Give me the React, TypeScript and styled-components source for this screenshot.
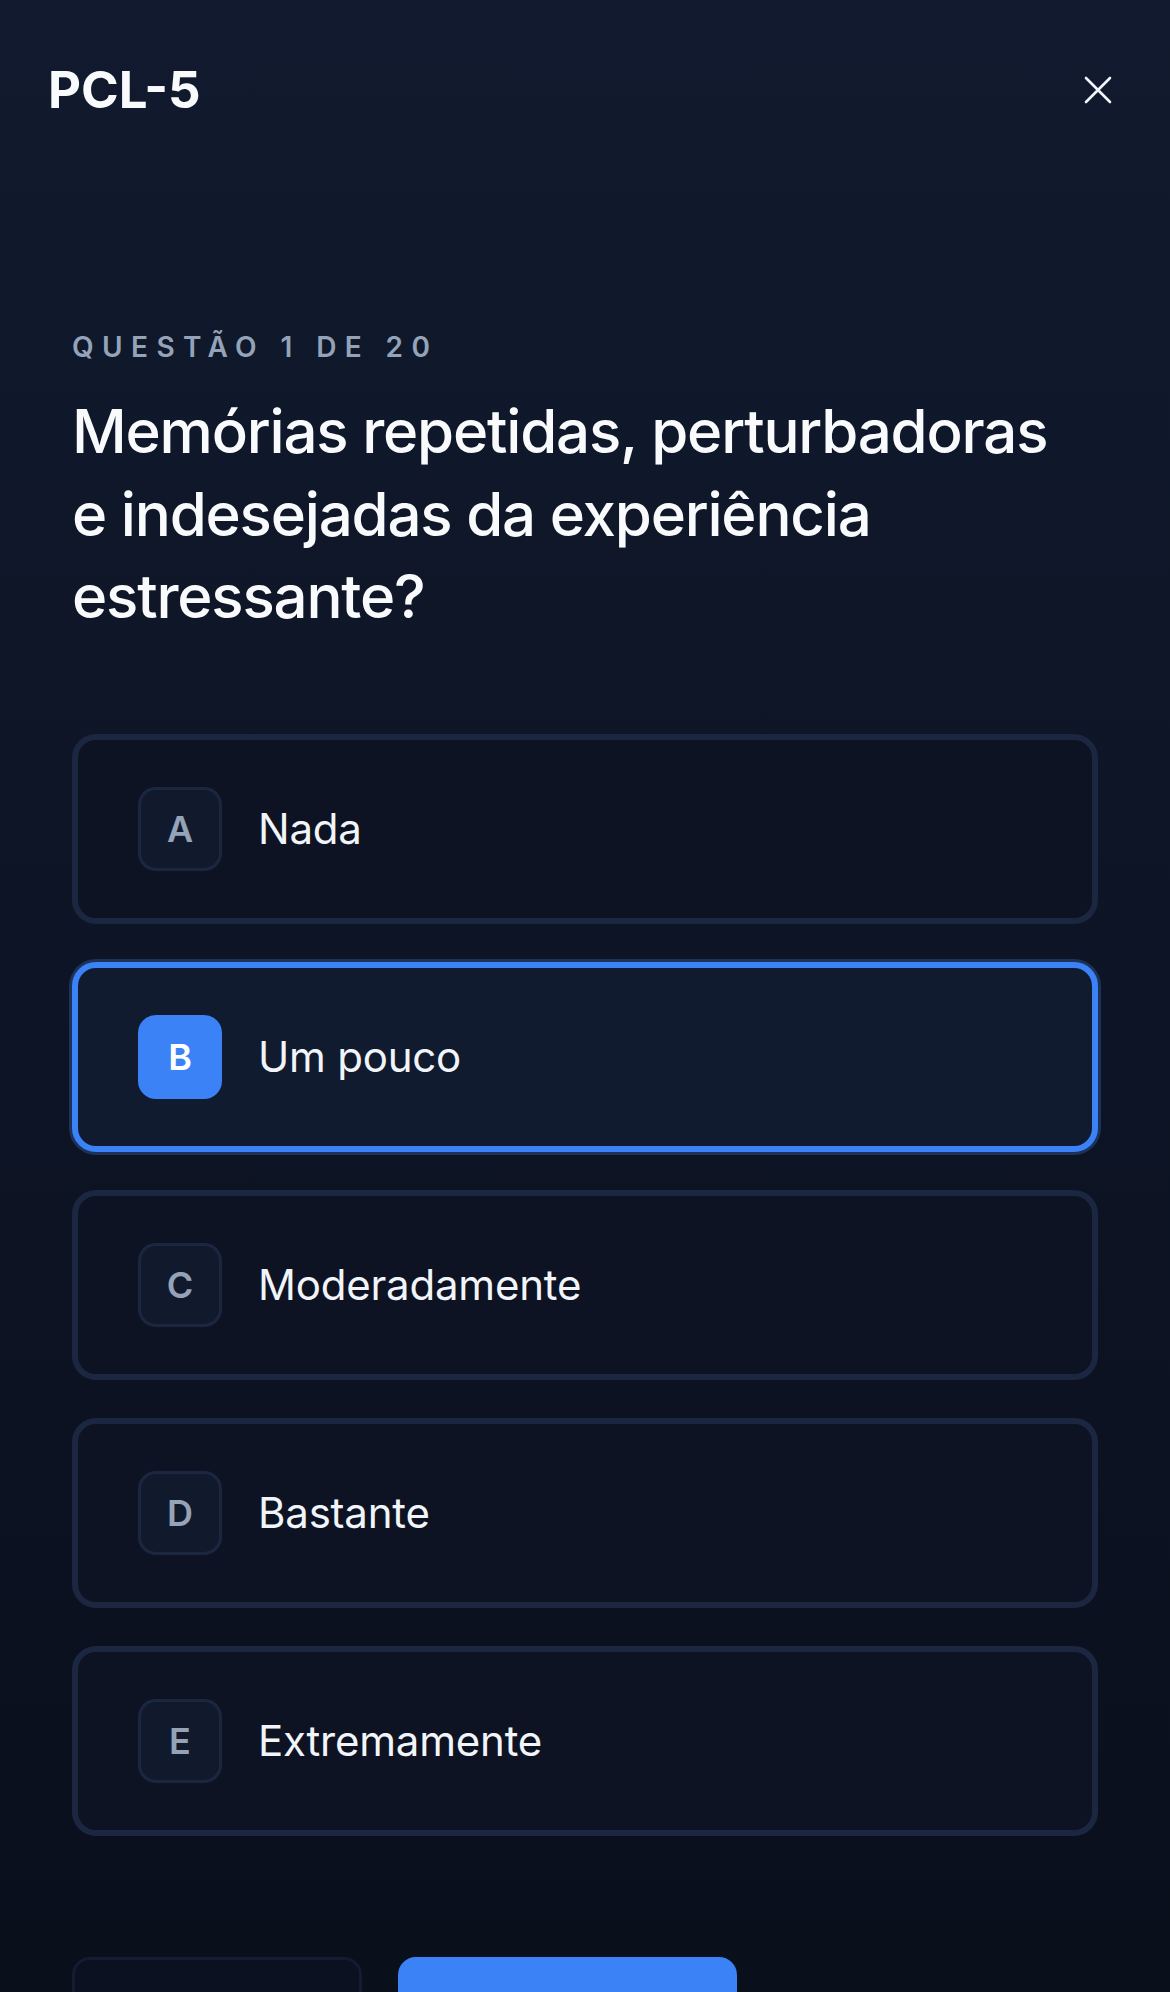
import styled, { createGlobalStyle } from "styled-components";

const GlobalStyle = createGlobalStyle`
  html, body {
    margin: 0;
    padding: 0;
    background: #0a0f1c;
    font-family: Inter, "Noto Sans", "Liberation Sans", sans-serif;
    -webkit-font-smoothing: antialiased;
  }
  * {
    box-sizing: border-box;
  }
`;

const Page = styled.div`
  min-height: 100vh;
  background: linear-gradient(180deg, #111a2e 0px, #0d1425 1000px, #0a0f1c 1992px);
  color: #f8fafc;
  padding-bottom: 48px;
`;

const Header = styled.header`
  display: flex;
  align-items: center;
  justify-content: space-between;
  padding: 64px 46px 0 48px;
`;

const Title = styled.h1`
  margin: 0;
  font-size: 51px;
  line-height: 48px;
  font-weight: 700;
  letter-spacing: 0;
  color: #f8fafc;
`;

const CloseButton = styled.button`
  width: 52px;
  height: 52px;
  display: flex;
  align-items: center;
  justify-content: center;
  padding: 0;
  border: none;
  background: transparent;
  color: #f1f5f9;
  cursor: pointer;
`;

const Content = styled.main`
  padding: 214px 72px 0;
`;

const Label = styled.div`
  font-size: 28px;
  line-height: 34px;
  font-weight: 600;
  letter-spacing: 0.3em;
  text-transform: uppercase;
  color: #94a3b8;
`;

const Question = styled.h2`
  margin: 26px 0 0;
  max-width: 1000px;
  font-size: 60px;
  line-height: 82.5px;
  font-weight: 500;
  letter-spacing: -0.02em;
  color: #f8fafc;
`;

const Options = styled.div`
  display: flex;
  flex-direction: column;
  gap: 38px;
  margin-top: 96px;
`;

const Option = styled.button<{ $selected?: boolean }>`
  display: flex;
  align-items: center;
  gap: 36px;
  width: 100%;
  height: 190px;
  padding: 0 60px;
  border-radius: 24px;
  border: 6px solid ${(p) => (p.$selected ? "#3b82f6" : "#1b2741")};
  background: ${(p) => (p.$selected ? "#111b30" : "#0d1322")};
  box-shadow: ${(p) => (p.$selected ? "0 0 0 3px #1c3258" : "none")};
  font-family: inherit;
  text-align: left;
  cursor: pointer;
`;

const Letter = styled.span<{ $selected?: boolean }>`
  flex: none;
  width: 84px;
  height: 84px;
  display: flex;
  align-items: center;
  justify-content: center;
  border-radius: 18px;
  border: 3px solid ${(p) => (p.$selected ? "#3b82f6" : "#1b2741")};
  background: ${(p) => (p.$selected ? "#3b82f6" : "#111a2d")};
  color: ${(p) => (p.$selected ? "#ffffff" : "#94a3b8")};
  font-size: 36px;
  font-weight: 600;
`;

const OptionText = styled.span`
  font-size: 42px;
  font-weight: 400;
  letter-spacing: -0.005em;
  color: #f1f5f9;
`;

const Footer = styled.div`
  display: flex;
  gap: 36px;
  padding: 121px 72px 0;
`;

const NavButton = styled.button<{ $primary?: boolean }>`
  width: ${(p) => (p.$primary ? "339px" : "290px")};
  height: 150px;
  border-radius: 18px;
  border: 3px solid ${(p) => (p.$primary ? "#3b82f6" : "#141c31")};
  background: ${(p) => (p.$primary ? "#3b82f6" : "#0b1120")};
  cursor: pointer;
`;

const options = [
  { key: "A", label: "Nada" },
  { key: "B", label: "Um pouco" },
  { key: "C", label: "Moderadamente" },
  { key: "D", label: "Bastante" },
  { key: "E", label: "Extremamente" },
];

const selected = "B";

export default function App() {
  return (
    <Page>
      <GlobalStyle />
      <Header>
        <Title>PCL-5</Title>
        <CloseButton aria-label="Fechar">
          <svg width="28" height="28" viewBox="0 0 28 28" fill="none">
            <path
              d="M2 2L26 26M26 2L2 26"
              stroke="currentColor"
              strokeWidth="2.6"
              strokeLinecap="round"
            />
          </svg>
        </CloseButton>
      </Header>
      <Content>
        <Label>Questão 1 de 20</Label>
        <Question>
          Memórias repetidas, perturbadoras e indesejadas da experiência
          estressante?
        </Question>
        <Options>
          {options.map((opt) => (
            <Option key={opt.key} $selected={opt.key === selected}>
              <Letter $selected={opt.key === selected}>{opt.key}</Letter>
              <OptionText>{opt.label}</OptionText>
            </Option>
          ))}
        </Options>
      </Content>
      <Footer>
        <NavButton aria-label="Anterior" />
        <NavButton aria-label="Próxima" $primary />
      </Footer>
    </Page>
  );
}
